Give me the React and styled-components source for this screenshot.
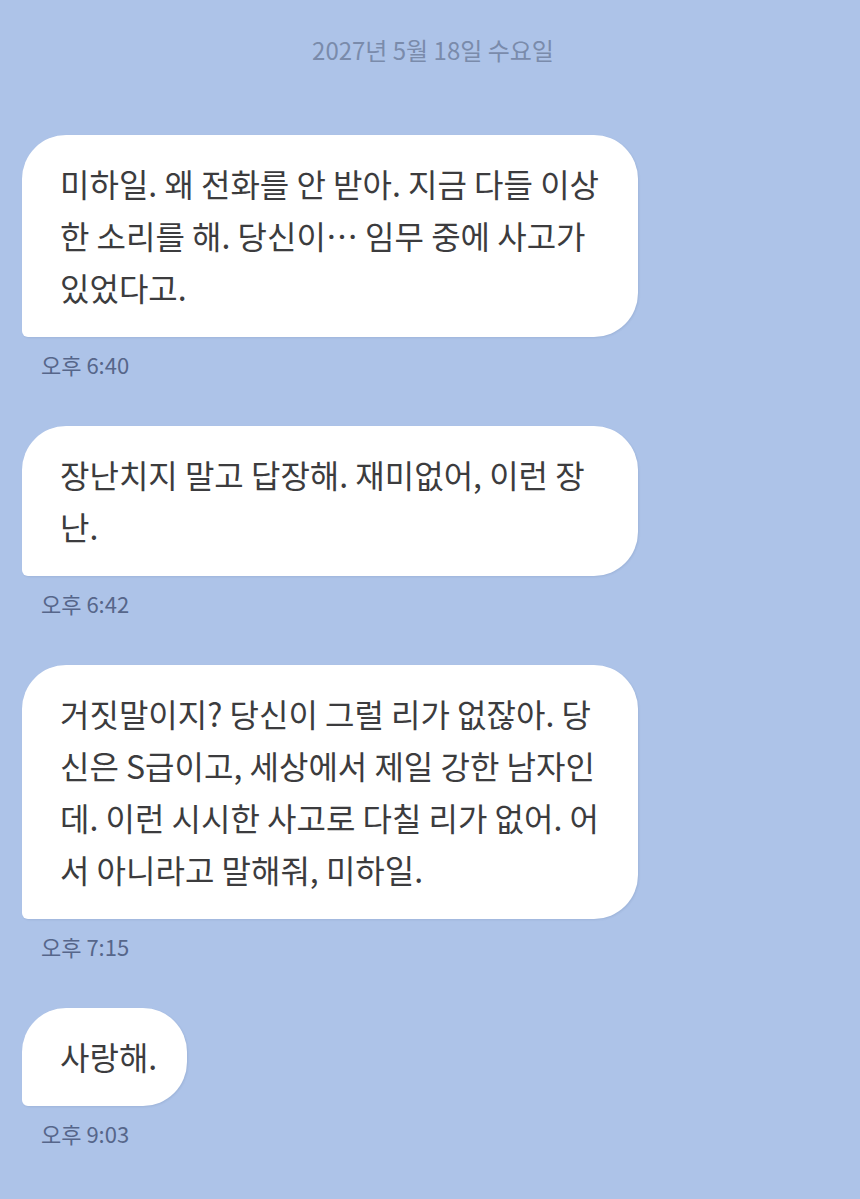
import React from "react";
import styled, { createGlobalStyle } from "styled-components";

const GlobalStyle = createGlobalStyle`
  html, body {
    margin: 0;
    padding: 0;
    background-color: #adc3e8;
  }
  body {
    font-family: "Noto Sans CJK KR", "Noto Sans", sans-serif;
  }
`;

const mensagens = [
  {
    id: 1,
    texto:
      "미하일. 왜 전화를 안 받아. 지금 다들 이상한 소리를 해. 당신이… 임무 중에 사고가 있었다고.",
    hora: "오후 6:40",
  },
  {
    id: 2,
    texto: "장난치지 말고 답장해. 재미없어, 이런 장난.",
    hora: "오후 6:42",
  },
  {
    id: 3,
    texto:
      "거짓말이지? 당신이 그럴 리가 없잖아. 당신은 S급이고, 세상에서 제일 강한 남자인데. 이런 시시한 사고로 다칠 리가 없어. 어서 아니라고 말해줘, 미하일.",
    hora: "오후 7:15",
  },
  {
    id: 4,
    texto: "사랑해.",
    hora: "오후 9:03",
  },
];

export default function App() {
  return (
    <>
      <GlobalStyle />
      <Tela>
        <Data>2027년 5월 18일 수요일</Data>
        <Lista>
          {mensagens.map((msg) => (
            <Mensagem key={msg.id}>
              <Balao>{msg.texto}</Balao>
              <Hora>{msg.hora}</Hora>
            </Mensagem>
          ))}
        </Lista>
      </Tela>
    </>
  );
}

const Tela = styled.div`
  min-height: 1199px;
  padding-top: 35px;
  box-sizing: border-box;
  background-color: #adc3e8;
  display: flex;
  flex-direction: column;
`;

const Data = styled.div`
  text-align: center;
  font-size: 24px;
  line-height: 30px;
  color: #7a8bab;
  padding-left: 6px;
`;

const Lista = styled.div`
  display: flex;
  flex-direction: column;
  gap: 48px;
  margin-top: 70px;
  padding-left: 22px;
`;

const Mensagem = styled.div`
  display: flex;
  flex-direction: column;
  align-items: flex-start;
`;

const Balao = styled.div`
  max-width: 616px;
  min-width: 165px;
  box-sizing: border-box;
  padding: 22px 28px 24px 38px;
  background-color: #ffffff;
  border-radius: 44px 44px 44px 6px;
  box-shadow: 1px 1px 2px rgba(60, 80, 120, 0.12);
  color: #3c3c3e;
  font-size: 32px;
  line-height: 52px;
  word-break: break-all;
`;

const Hora = styled.div`
  margin-top: 13px;
  margin-left: 19px;
  font-size: 22px;
  line-height: 28px;
  color: #56668a;
`;
